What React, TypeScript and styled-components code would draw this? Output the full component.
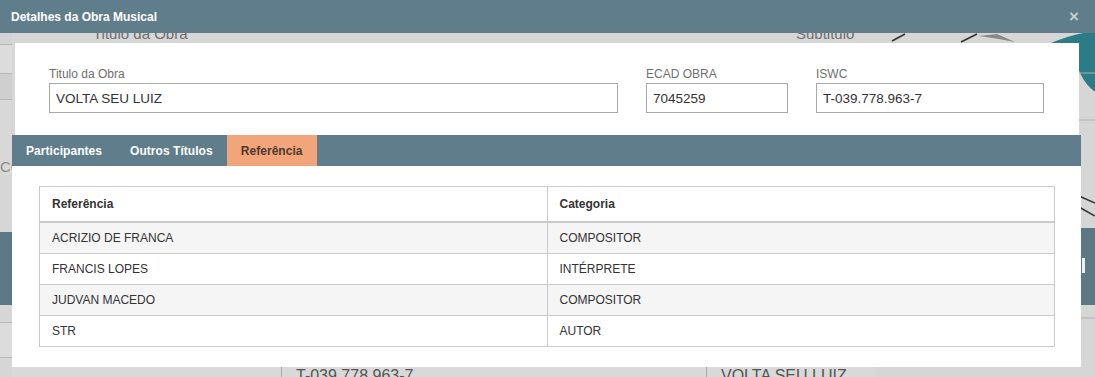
import React from 'react';
import styled, { createGlobalStyle } from 'styled-components';

const GlobalStyle = createGlobalStyle`
  html, body {
    margin: 0;
    padding: 0;
  }
  body {
    font-family: 'Liberation Sans', Arial, sans-serif;
    background: #d6d6d6;
  }
`;

const Screen = styled.div`
  position: relative;
  width: 1095px;
  height: 377px;
  overflow: hidden;
`;

/* page that sits behind the modal */
const BgPage = styled.div`
  display: grid;
  grid-template-columns: 12px 863px 220px;
  grid-template-rows: 26px 29px 1fr 17px;
  height: 377px;
  background: #d6d6d6;
  color: #666;
`;

const BgLeftStrip = styled.div`
  grid-column: 1;
  grid-row: 1 / 5;
  display: flex;
  flex-direction: column;
  padding-top: 33px;
`;

const StripCell = styled.div<{ $h: number; $bg: string; $line?: boolean }>`
  height: ${(p) => p.$h}px;
  background: ${(p) => p.$bg};
  border-bottom: ${(p) => (p.$line ? '1px solid #b8b8b8' : 'none')};
  font-size: 15px;
  line-height: ${(p) => p.$h}px;
  color: #8a8a8a;
  white-space: nowrap;
  flex-shrink: 0;
`;

const BgLabels = styled.div`
  grid-column: 2;
  grid-row: 2;
  display: grid;
  grid-template-columns: 81px 703px 1fr;
  font-size: 15px;
  line-height: 15px;
  color: #6e6e6e;
  white-space: nowrap;
`;

const BgBottomRow = styled.div`
  grid-column: 2;
  grid-row: 4;
  display: grid;
  grid-template-columns: 269px 425px 1fr;
  background: #d9d9d9;
`;

const BgCell = styled.div<{ $divided?: boolean }>`
  border-left: ${(p) => (p.$divided ? '1px solid #a8a8a8' : 'none')};
  padding: 7px 0 0 14px;
  font-size: 16px;
  line-height: 18px;
  color: #555;
  white-space: nowrap;
`;

const BgArt = styled.svg`
  grid-column: 3;
  grid-row: 2 / 5;
  margin-top: 7px;
  display: block;
`;

/* modal */
const Modal = styled.div`
  position: absolute;
  inset: 0;
  display: flex;
  flex-direction: column;
`;

const ModalHeader = styled.header`
  height: 33px;
  flex-shrink: 0;
  background: #607d8b;
  display: flex;
  align-items: center;
  justify-content: space-between;
  padding: 0 16px 0 11px;
  color: #fff;
`;

const ModalTitle = styled.h1`
  margin: 0;
  font-size: 12px;
  font-weight: bold;
`;

const CloseButton = styled.button`
  background: none;
  border: 0;
  padding: 0;
  font-family: 'Liberation Sans', Arial, sans-serif;
  font-size: 17px;
  font-weight: bold;
  line-height: 1;
  color: #c4ced3;
  cursor: pointer;
`;

const ModalBody = styled.div`
  padding-top: 10px;
  display: flex;
  flex-direction: column;
`;

const FieldsCard = styled.div`
  margin: 0 16px 0 15px;
  background: #fff;
  padding: 24px 35px 22px 34px;
  display: grid;
  grid-template-columns: 569px 142px 1fr;
  column-gap: 28px;
`;

const Field = styled.label`
  display: flex;
  flex-direction: column;
  gap: 2px;
`;

const FieldLabel = styled.span`
  font-size: 12px;
  line-height: 14px;
  color: #707070;
`;

const TextInput = styled.input`
  box-sizing: border-box;
  height: 30px;
  width: 100%;
  border: 1px solid #a9a9a9;
  border-radius: 0;
  padding: 0 6px;
  font-family: inherit;
  font-size: 13.5px;
  color: #333;
  background: #fff;
  outline: none;
`;

const TabsPanel = styled.section`
  margin: 0 14px 0 12px;
  background: #fff;
`;

const TabBar = styled.nav`
  height: 31px;
  background: #607d8b;
  display: flex;
`;

const Tab = styled.div<{ $active?: boolean }>`
  display: flex;
  align-items: center;
  padding: 0 14px;
  font-size: 12px;
  font-weight: bold;
  letter-spacing: 0.05px;
  color: ${(p) => (p.$active ? '#4e3a2e' : '#fff')};
  background: ${(p) => (p.$active ? '#f2a47b' : 'transparent')};
  cursor: pointer;
`;

const TabContent = styled.div`
  padding: 20px 26px 20px 27px;
`;

const Table = styled.table`
  width: 100%;
  border-collapse: collapse;
  border: 1px solid #cacaca;
  font-size: 12px;
  color: #333;
`;

const Th = styled.th`
  width: 50%;
  text-align: left;
  font-weight: bold;
  line-height: 14px;
  padding: 10px 12px;
  border: 1px solid #cacaca;
  border-bottom-width: 2px;
`;

const Row = styled.tr`
  &:nth-child(odd) {
    background: #f5f5f5;
  }
`;

const Td = styled.td`
  line-height: 14px;
  padding: 8px 12px;
  border: 1px solid #cacaca;
`;

const referencias = [
  { nome: 'ACRIZIO DE FRANCA', categoria: 'COMPOSITOR' },
  { nome: 'FRANCIS LOPES', categoria: 'INTÉRPRETE' },
  { nome: 'JUDVAN MACEDO', categoria: 'COMPOSITOR' },
  { nome: 'STR', categoria: 'AUTOR' },
];

const tabs = ['Participantes', 'Outros Títulos', 'Referência'];

function BackgroundPage() {
  return (
    <BgPage>
      <BgLeftStrip>
        <StripCell $h={11} $bg="#d3d2d5" $line />
        <StripCell $h={28} $bg="#dcdcdc" $line />
        <StripCell $h={25} $bg="#cfcfcf" $line />
        <StripCell $h={60} $bg="#d8d8d8" />
        <StripCell $h={14} $bg="#d8d8d8">CO</StripCell>
        <StripCell $h={58} $bg="#d6d6d6" />
        <StripCell $h={73} $bg="#5d7985" />
        <StripCell $h={17} $bg="#d6d6d6" $line />
        <StripCell $h={34} $bg="#dcdcdc" $line />
        <StripCell $h={22} $bg="#d6d6d6" />
      </BgLeftStrip>
      <BgLabels>
        <span />
        <span>Titulo da Obra</span>
        <span>Subtitulo</span>
      </BgLabels>
      <BgBottomRow>
        <span />
        <BgCell $divided>T-039.778.963-7</BgCell>
        <BgCell $divided>VOLTA SEU LUIZ</BgCell>
      </BgBottomRow>
      <BgArt width="220" height="344" viewBox="0 0 220 344">
        <path d="M176 10 Q200 0 222 -2 L222 60 Q212 54 206 42 Q198 22 176 10 Z" fill="#2b7c87" />
        <line x1="17" y1="8" x2="30" y2="1" stroke="#333" strokeWidth="1.6" />
        <line x1="86" y1="9" x2="102" y2="1" stroke="#333" strokeWidth="1.6" />
        <polygon points="104,3 122,1 140,9 124,6" fill="#888" />
        <line x1="200" y1="40" x2="220" y2="40" stroke="#b0b0b0" />
        <line x1="200" y1="87" x2="220" y2="87" stroke="#b0b0b0" />
        <line x1="204" y1="163" x2="220" y2="170" stroke="#333" strokeWidth="1.5" />
        <line x1="204" y1="174" x2="220" y2="183" stroke="#333" strokeWidth="1.5" />
        <rect x="204" y="195" width="16" height="77" fill="#5b7884" />
        <rect x="207" y="225" width="3" height="15" fill="#eeeeee" />
        <line x1="200" y1="285" x2="220" y2="285" stroke="#b0b0b0" />
      </BgArt>
    </BgPage>
  );
}

function App() {
  return (
    <Screen>
      <GlobalStyle />
      <BackgroundPage />
      <Modal>
        <ModalHeader>
          <ModalTitle>Detalhes da Obra Musical</ModalTitle>
          <CloseButton aria-label="Fechar">×</CloseButton>
        </ModalHeader>
        <ModalBody>
          <FieldsCard>
            <Field>
              <FieldLabel>Titulo da Obra</FieldLabel>
              <TextInput readOnly value="VOLTA SEU LUIZ" />
            </Field>
            <Field>
              <FieldLabel>ECAD OBRA</FieldLabel>
              <TextInput readOnly value="7045259" />
            </Field>
            <Field>
              <FieldLabel>ISWC</FieldLabel>
              <TextInput readOnly value="T-039.778.963-7" />
            </Field>
          </FieldsCard>
          <TabsPanel>
            <TabBar>
              {tabs.map((t) => (
                <Tab key={t} $active={t === 'Referência'}>
                  {t}
                </Tab>
              ))}
            </TabBar>
            <TabContent>
              <Table>
                <thead>
                  <tr>
                    <Th>Referência</Th>
                    <Th>Categoria</Th>
                  </tr>
                </thead>
                <tbody>
                  {referencias.map((r) => (
                    <Row key={r.nome}>
                      <Td>{r.nome}</Td>
                      <Td>{r.categoria}</Td>
                    </Row>
                  ))}
                </tbody>
              </Table>
            </TabContent>
          </TabsPanel>
        </ModalBody>
      </Modal>
    </Screen>
  );
}

export default App;
